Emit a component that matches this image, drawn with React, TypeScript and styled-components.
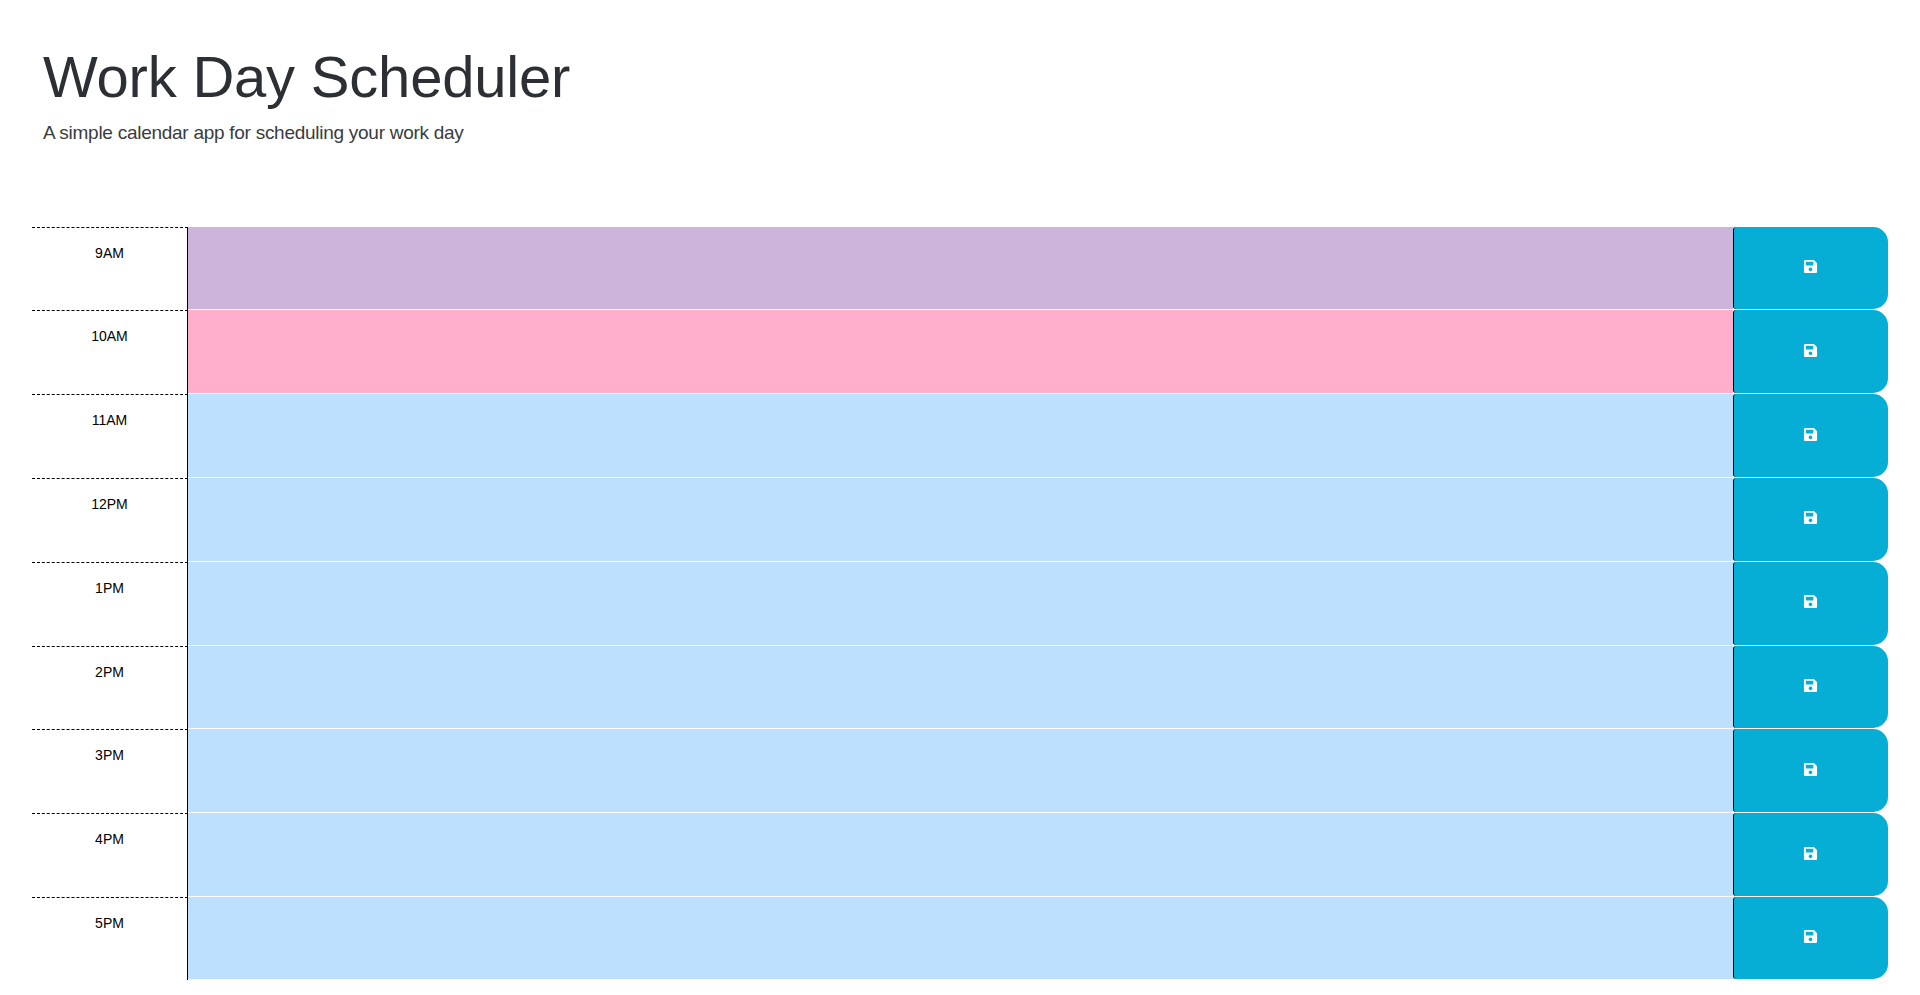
import styled, { createGlobalStyle } from 'styled-components';
import { FaSave } from 'react-icons/fa';

const GlobalStyle = createGlobalStyle`
  * {
    box-sizing: border-box;
  }
  html,
  body {
    margin: 0;
    background: #fff;
    font-family: 'Liberation Sans', Arial, sans-serif;
    color: #212529;
  }
`;

const Header = styled.header`
  height: 226.6px;
  padding: 42px 43px 0;
`;

const Title = styled.h1`
  margin: 0;
  font-size: 58px;
  font-weight: 400;
  line-height: 69px;
  letter-spacing: -0.2px;
  color: #2c3034;
`;

const Lead = styled.p`
  margin: 10px 0 0;
  font-size: 19px;
  line-height: 24px;
  letter-spacing: -0.27px;
  color: #383c41;
`;

const Planner = styled.main`
  margin: 0 32px;
`;

const Row = styled.div`
  display: grid;
  grid-template-columns: 156px 1fr 155px;
  height: 83.8px;

  &:last-child {
    height: 83px;
  }
`;

const Hour = styled.div`
  padding-top: 16px;
  border-top: 1px dashed #000;
  border-right: 1px solid #000;
  font-size: 14px;
  line-height: 18px;
  text-align: center;
  color: #000;
`;

const colours = {
  past: '#cdb4db',
  present: '#ffafcc',
  future: '#bde0fe',
};

type Tense = keyof typeof colours;

const Notes = styled.textarea<{ $tense: Tense }>`
  display: block;
  width: 100%;
  height: 100%;
  padding: 8px;
  border: 0;
  border-bottom: 1px solid #fff;
  border-radius: 0;
  outline: none;
  resize: none;
  background: ${(p) => colours[p.$tense]};
`;

const SaveButton = styled.button`
  display: flex;
  align-items: center;
  justify-content: center;
  height: calc(100% - 1px);
  padding: 0 1px 3px 0;
  border: 0;
  border-left: 1px solid #000;
  border-radius: 3px 15px 15px 3px;
  background: #06aed5;
  color: #fff;
  font-size: 15px;
  cursor: pointer;
`;

const hours: { label: string; tense: Tense }[] = [
  { label: '9AM', tense: 'past' },
  { label: '10AM', tense: 'present' },
  { label: '11AM', tense: 'future' },
  { label: '12PM', tense: 'future' },
  { label: '1PM', tense: 'future' },
  { label: '2PM', tense: 'future' },
  { label: '3PM', tense: 'future' },
  { label: '4PM', tense: 'future' },
  { label: '5PM', tense: 'future' },
];

export default function App() {
  return (
    <>
      <GlobalStyle />
      <Header>
        <Title>Work Day Scheduler</Title>
        <Lead>A simple calendar app for scheduling your work day</Lead>
      </Header>
      <Planner>
        {hours.map((h) => (
          <Row key={h.label}>
            <Hour>{h.label}</Hour>
            <Notes $tense={h.tense} />
            <SaveButton>
              <FaSave />
            </SaveButton>
          </Row>
        ))}
      </Planner>
    </>
  );
}
